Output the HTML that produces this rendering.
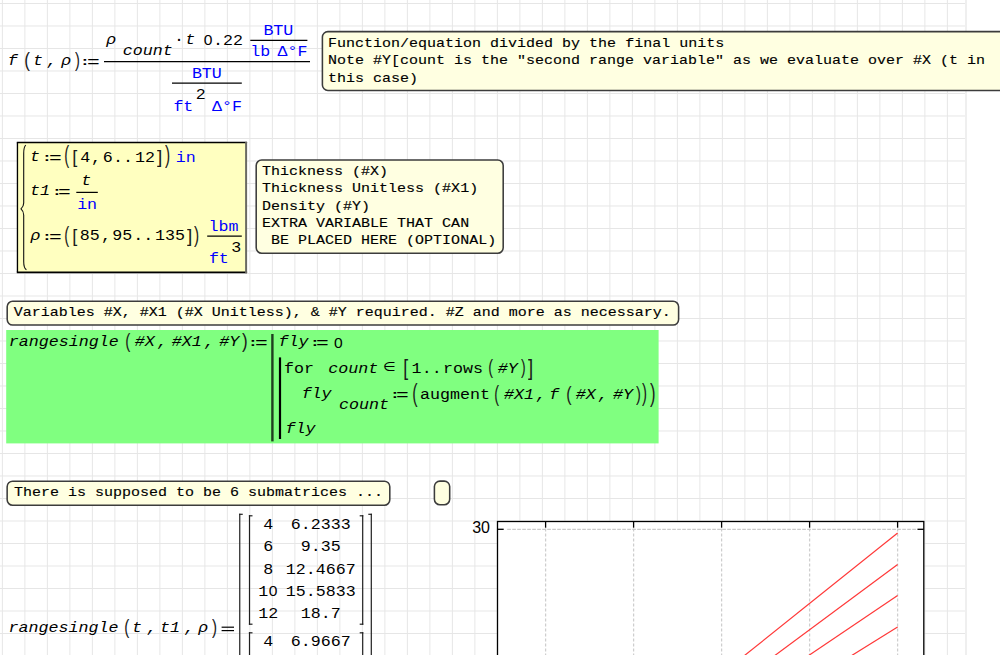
<!DOCTYPE html>
<html><head><meta charset="utf-8"><title>SMath worksheet</title>
<style>
html,body{margin:0;padding:0}
body{width:1000px;height:655px;overflow:hidden;position:relative;background:#fff;font-family:"Liberation Mono",monospace}
#grid{position:absolute;left:0;top:0;width:966.6px;height:655px;
 background-image:linear-gradient(to right,#e6e6e6 1.2px,transparent 1.2px),linear-gradient(to bottom,#e6e6e6 1.2px,transparent 1.2px);
 background-size:22.5px 22.5px;background-position:1.9px 3.0px}
#edge{position:absolute;left:965.4px;top:0;width:1.2px;height:655px;background:#efefef}
.t{position:absolute;white-space:pre;line-height:1;font-size:16.67px;color:#000;font-family:"Liberation Mono",monospace}
.mi,.mn,.mu{transform-origin:0 12px;transform:scaleY(0.88)}
.tx{transform-origin:0 11px;transform:scaleY(0.8);-webkit-text-stroke:0.15px #000}
.z{font:normal 15.6px "Liberation Sans",sans-serif;display:inline-block;width:10px;text-align:center;line-height:0}
.mi{font-style:italic}
.mu{color:#0000ff}
.ss{font-family:"Liberation Sans",sans-serif}
.c{text-align:center}
#shapes{position:absolute;left:0;top:0;overflow:hidden}
</style></head><body>
<div id="grid"></div><div id="edge"></div>
<svg id="shapes" width="1000" height="655" viewBox="0 0 1000 655">
<line x1="104.00" y1="61.60" x2="310.00" y2="61.60" stroke="#000" stroke-width="1.25"/>
<line x1="250.30" y1="40.30" x2="307.40" y2="40.30" stroke="#000" stroke-width="1.25"/>
<line x1="172.00" y1="83.00" x2="241.80" y2="83.00" stroke="#000" stroke-width="1.25"/>
<rect x="322.40" y="31.60" width="697.60" height="58.80" rx="5.5" fill="#ffffe1" stroke="#3c3c3c" stroke-width="1.55"/>
<rect x="17.45" y="142.5" width="228.9" height="129.85" fill="#ffffc0"/>
<line x1="16.80" y1="142.50" x2="247.10" y2="142.50" stroke="#000" stroke-width="1.35"/>
<line x1="17.45" y1="142.50" x2="17.45" y2="272.30" stroke="#000" stroke-width="1.35"/>
<line x1="16.80" y1="272.30" x2="247.10" y2="272.30" stroke="#000" stroke-width="1.80"/>
<line x1="246.10" y1="141.90" x2="246.10" y2="273.20" stroke="#6a6a62" stroke-width="2.00"/>
<path d="M25.8 145.2 C24.2 146.6 23.7 149 23.7 153.5 L23.7 203 Q23.7 206.5 21.0 208.9 Q23.7 211.3 23.7 215 L23.7 261.5 C23.7 266 24.2 268.4 26.4 269.8" fill="none" stroke="#111" stroke-width="1.1"/>
<line x1="76.30" y1="192.40" x2="97.80" y2="192.40" stroke="#000" stroke-width="1.25"/>
<line x1="207.20" y1="236.10" x2="241.80" y2="236.10" stroke="#000" stroke-width="1.25"/>
<rect x="256.20" y="160.00" width="247.00" height="93.20" rx="5.5" fill="#ffffe1" stroke="#3c3c3c" stroke-width="1.55"/>
<rect x="7.20" y="301.30" width="671.40" height="23.80" rx="5.5" fill="#ffffe1" stroke="#3c3c3c" stroke-width="1.55"/>
<rect x="6.2" y="330" width="652.4" height="113.4" fill="#80ff80"/>
<line x1="272.40" y1="334.00" x2="272.40" y2="441.40" stroke="#1f3f1f" stroke-width="2.40"/>
<line x1="280.00" y1="357.40" x2="280.00" y2="439.00" stroke="#000" stroke-width="2.20"/>
<rect x="7.15" y="481.20" width="382.65" height="24.00" rx="5.5" fill="#ffffe1" stroke="#3c3c3c" stroke-width="1.55"/>
<rect x="434.40" y="481.10" width="15.30" height="23.60" rx="5.5" fill="#ffffe1" stroke="#3c3c3c" stroke-width="1.55"/>
<line x1="221.60" y1="627.20" x2="234.00" y2="627.20" stroke="#000" stroke-width="1.20"/>
<line x1="221.60" y1="630.60" x2="234.00" y2="630.60" stroke="#000" stroke-width="1.20"/>
<line x1="239.75" y1="513.70" x2="239.75" y2="660.00" stroke="#202020" stroke-width="1.20"/>
<line x1="239.15" y1="514.30" x2="242.75" y2="514.30" stroke="#202020" stroke-width="1.20"/>
<line x1="371.30" y1="513.70" x2="371.30" y2="660.00" stroke="#202020" stroke-width="1.20"/>
<line x1="368.30" y1="514.30" x2="371.90" y2="514.30" stroke="#202020" stroke-width="1.20"/>
<line x1="249.50" y1="515.20" x2="249.50" y2="624.80" stroke="#202020" stroke-width="1.20"/>
<line x1="248.90" y1="515.80" x2="252.50" y2="515.80" stroke="#202020" stroke-width="1.20"/>
<line x1="248.90" y1="624.20" x2="252.50" y2="624.20" stroke="#202020" stroke-width="1.20"/>
<line x1="362.70" y1="515.20" x2="362.70" y2="624.80" stroke="#202020" stroke-width="1.20"/>
<line x1="359.70" y1="515.80" x2="363.30" y2="515.80" stroke="#202020" stroke-width="1.20"/>
<line x1="359.70" y1="624.20" x2="363.30" y2="624.20" stroke="#202020" stroke-width="1.20"/>
<line x1="249.50" y1="632.20" x2="249.50" y2="660.00" stroke="#202020" stroke-width="1.20"/>
<line x1="248.90" y1="632.80" x2="252.50" y2="632.80" stroke="#202020" stroke-width="1.20"/>
<line x1="362.70" y1="632.20" x2="362.70" y2="660.00" stroke="#202020" stroke-width="1.20"/>
<line x1="359.70" y1="632.80" x2="363.30" y2="632.80" stroke="#202020" stroke-width="1.20"/>
<rect x="497.5" y="521.5" width="426.3" height="200" fill="#fff" stroke="#000" stroke-width="1.3"/>
<line x1="545.6" y1="528.6" x2="545.6" y2="660" stroke="#cecece" stroke-width="1.25" stroke-dasharray="2.9 2.1"/>
<line x1="545.6" y1="521.5" x2="545.6" y2="527.7" stroke="#000" stroke-width="1.3"/>
<line x1="633.6" y1="528.6" x2="633.6" y2="660" stroke="#cecece" stroke-width="1.25" stroke-dasharray="2.9 2.1"/>
<line x1="633.6" y1="521.5" x2="633.6" y2="527.7" stroke="#000" stroke-width="1.3"/>
<line x1="721.6" y1="528.6" x2="721.6" y2="660" stroke="#cecece" stroke-width="1.25" stroke-dasharray="2.9 2.1"/>
<line x1="721.6" y1="521.5" x2="721.6" y2="527.7" stroke="#000" stroke-width="1.3"/>
<line x1="809.6" y1="528.6" x2="809.6" y2="660" stroke="#cecece" stroke-width="1.25" stroke-dasharray="2.9 2.1"/>
<line x1="809.6" y1="521.5" x2="809.6" y2="527.7" stroke="#000" stroke-width="1.3"/>
<line x1="897.6" y1="528.6" x2="897.6" y2="660" stroke="#cecece" stroke-width="1.25" stroke-dasharray="2.9 2.1"/>
<line x1="897.6" y1="521.5" x2="897.6" y2="527.7" stroke="#000" stroke-width="1.3"/>
<line x1="507.2" y1="529.4" x2="917.5" y2="529.4" stroke="#cacaca" stroke-width="1.25" stroke-dasharray="3.7 1.3"/>
<line x1="497.5" y1="529.3" x2="503.7" y2="529.3" stroke="#000" stroke-width="1.3"/>
<line x1="917.5" y1="529.3" x2="923.8" y2="529.3" stroke="#000" stroke-width="1.3"/>
<line x1="897.6" y1="533.0" x2="736.4" y2="662.0" stroke="#ff3838" stroke-width="1.2"/>
<line x1="897.6" y1="564.4" x2="766.1" y2="662.0" stroke="#ff3838" stroke-width="1.2"/>
<line x1="897.6" y1="595.4" x2="799.1" y2="662.0" stroke="#ff3838" stroke-width="1.2"/>
<line x1="897.6" y1="627.0" x2="841.3" y2="662.0" stroke="#ff3838" stroke-width="1.2"/>
</svg>
<span class="t mi" style="left:7.64px;top:53.00px;">f</span>
<span class="t" style="left:24.46px;top:49.46px;font-size:20.0px;font-family:'Liberation Sans',sans-serif;transform-origin:1.24px 2.44px;transform:scale(0.849,1.047);color:#1a1a1a;">(</span>
<span class="t mi" style="left:32.92px;top:53.00px;">t</span>
<span class="t mi" style="left:46.82px;top:53.00px;">,</span>
<span class="t mi" style="left:61.35px;top:53.00px;">ρ</span>
<span class="t" style="left:74.68px;top:49.46px;font-size:20.0px;font-family:'Liberation Sans',sans-serif;transform-origin:0.12px 2.44px;transform:scale(0.735,1.047);color:#1a1a1a;">)</span>
<span class="t" style="left:80.23px;top:55.22px;font-size:16.0px;font-family:'Liberation Mono',monospace;transform-origin:3.67px 3.78px;transform:scale(1.063,0.708);font-weight:bold;">:</span>
<span class="t" style="left:86.71px;top:54.11px;font-size:21.0px;font-family:'Liberation Mono',monospace;transform-origin:1.19px 5.79px;transform:scale(1.010,0.754);">=</span>
<span class="t mi" style="left:106.25px;top:32.00px;">ρ</span>
<span class="t mi" style="left:122.69px;top:43.00px;">count</span>
<span class="t mn" style="left:173.96px;top:32.00px;">·</span>
<span class="t mi" style="left:185.22px;top:32.00px;">t</span>
<span class="t mn" style="left:203.09px;top:33.00px;"><b class="z">0</b>.22</span>
<span class="t mu" style="left:263.38px;top:23.00px;">BTU</span>
<span class="t mu" style="left:250.23px;top:44.00px;">lb</span>
<span class="t mu" style="left:277.60px;top:44.00px;">Δ°F</span>
<span class="t mu" style="left:191.88px;top:66.00px;">BTU</span>
<span class="t mu" style="left:173.38px;top:99.00px;">ft</span>
<span class="t mn" style="left:195.63px;top:87.00px;">2</span>
<span class="t mu" style="left:212.10px;top:99.00px;">Δ°F</span>
<span class="t tx" style="left:328.08px;top:36.00px;font-size:15.00px;">Function/equation divided by the final units</span>
<span class="t tx" style="left:327.91px;top:53.00px;font-size:15.00px;">Note #Y[count is the "second range variable" as we evaluate over #X (t in</span>
<span class="t tx" style="left:328.11px;top:71.00px;font-size:15.00px;">this case)</span>
<span class="t mi" style="left:29.92px;top:149.00px;">t</span>
<span class="t" style="left:42.13px;top:151.32px;font-size:16.0px;font-family:'Liberation Mono',monospace;transform-origin:3.67px 3.78px;transform:scale(1.063,0.708);font-weight:bold;">:</span>
<span class="t" style="left:48.61px;top:150.21px;font-size:21.0px;font-family:'Liberation Mono',monospace;transform-origin:1.19px 5.79px;transform:scale(1.010,0.754);">=</span>
<span class="t" style="left:64.06px;top:143.36px;font-size:20.0px;font-family:'Liberation Sans',sans-serif;transform-origin:1.24px 2.44px;transform:scale(0.735,1.186);color:#1a1a1a;">(</span>
<span class="t" style="left:71.57px;top:146.56px;font-size:20.0px;font-family:'Liberation Sans',sans-serif;transform-origin:1.43px 2.44px;transform:scale(0.906,0.944);color:#1a1a1a;">[</span>
<span class="t mn" style="left:80.36px;top:150.00px;">4</span>
<span class="t mn" style="left:91.09px;top:150.00px;">,</span>
<span class="t mn" style="left:102.67px;top:150.00px;">6</span>
<span class="t mn" style="left:112.96px;top:150.00px;">..</span>
<span class="t mn" style="left:135.10px;top:150.00px;">12</span>
<span class="t" style="left:157.34px;top:146.56px;font-size:20.0px;font-family:'Liberation Sans',sans-serif;transform-origin:0.16px 2.44px;transform:scale(0.956,0.944);color:#1a1a1a;">]</span>
<span class="t" style="left:164.58px;top:143.36px;font-size:20.0px;font-family:'Liberation Sans',sans-serif;transform-origin:0.12px 2.44px;transform:scale(0.773,1.186);color:#1a1a1a;">)</span>
<span class="t mu" style="left:175.84px;top:150.00px;">in</span>
<span class="t mi" style="left:29.92px;top:183.00px;">t1</span>
<span class="t" style="left:51.83px;top:185.42px;font-size:16.0px;font-family:'Liberation Mono',monospace;transform-origin:3.67px 3.78px;transform:scale(1.063,0.708);font-weight:bold;">:</span>
<span class="t" style="left:58.31px;top:184.31px;font-size:21.0px;font-family:'Liberation Mono',monospace;transform-origin:1.19px 5.79px;transform:scale(1.010,0.754);">=</span>
<span class="t mi" style="left:81.22px;top:173.00px;">t</span>
<span class="t mu" style="left:77.14px;top:197.00px;">in</span>
<span class="t mi" style="left:30.45px;top:228.00px;">ρ</span>
<span class="t" style="left:42.13px;top:230.32px;font-size:16.0px;font-family:'Liberation Mono',monospace;transform-origin:3.67px 3.78px;transform:scale(1.063,0.708);font-weight:bold;">:</span>
<span class="t" style="left:48.61px;top:229.21px;font-size:21.0px;font-family:'Liberation Mono',monospace;transform-origin:1.19px 5.79px;transform:scale(1.010,0.754);">=</span>
<span class="t" style="left:64.06px;top:223.36px;font-size:20.0px;font-family:'Liberation Sans',sans-serif;transform-origin:1.24px 2.44px;transform:scale(0.735,1.116);color:#1a1a1a;">(</span>
<span class="t" style="left:71.57px;top:226.56px;font-size:20.0px;font-family:'Liberation Sans',sans-serif;transform-origin:1.43px 2.44px;transform:scale(0.906,0.890);color:#1a1a1a;">[</span>
<span class="t mn" style="left:79.82px;top:228.00px;">85</span>
<span class="t mn" style="left:100.89px;top:228.00px;">,</span>
<span class="t mn" style="left:112.25px;top:228.00px;">95</span>
<span class="t mn" style="left:133.26px;top:228.00px;">..</span>
<span class="t mn" style="left:155.00px;top:228.00px;">135</span>
<span class="t" style="left:187.04px;top:226.56px;font-size:20.0px;font-family:'Liberation Sans',sans-serif;transform-origin:0.16px 2.44px;transform:scale(0.956,0.890);color:#1a1a1a;">]</span>
<span class="t" style="left:194.38px;top:223.36px;font-size:20.0px;font-family:'Liberation Sans',sans-serif;transform-origin:0.12px 2.44px;transform:scale(0.773,1.116);color:#1a1a1a;">)</span>
<span class="t mu" style="left:208.43px;top:219.00px;">lbm</span>
<span class="t mu" style="left:208.88px;top:251.00px;">ft</span>
<span class="t mn" style="left:231.16px;top:240.00px;">3</span>
<span class="t tx" style="left:262.10px;top:164.00px;font-size:15.00px;white-space:pre;">Thickness (#X)</span>
<span class="t tx" style="left:262.10px;top:181.00px;font-size:15.00px;white-space:pre;">Thickness Unitless (#X1)</span>
<span class="t tx" style="left:262.10px;top:199.00px;font-size:15.00px;white-space:pre;">Density (#Y)</span>
<span class="t tx" style="left:262.10px;top:216.00px;font-size:15.00px;white-space:pre;">EXTRA VARIABLE THAT CAN</span>
<span class="t tx" style="left:262.10px;top:233.00px;font-size:15.00px;white-space:pre;"> BE PLACED HERE (OPTIONAL)</span>
<span class="t tx" style="left:13.73px;top:305.00px;font-size:15.00px;">Variables #X, #X1 (#X Unitless), &amp; #Y required. #Z and more as necessary.</span>
<span class="t mi" style="left:8.76px;top:334.00px;">rangesingle</span>
<span class="t" style="left:124.76px;top:330.56px;font-size:20.0px;font-family:'Liberation Sans',sans-serif;transform-origin:1.24px 2.44px;transform:scale(0.754,1.020);color:#1a1a1a;">(</span>
<span class="t mi" style="left:134.77px;top:334.00px;">#X</span>
<span class="t mi" style="left:157.32px;top:334.00px;">,</span>
<span class="t mi" style="left:171.77px;top:334.00px;">#X1</span>
<span class="t mi" style="left:204.32px;top:334.00px;">,</span>
<span class="t mi" style="left:219.37px;top:334.00px;">#Y</span>
<span class="t" style="left:241.88px;top:330.56px;font-size:20.0px;font-family:'Liberation Sans',sans-serif;transform-origin:0.12px 2.44px;transform:scale(0.849,1.020);color:#1a1a1a;">)</span>
<span class="t" style="left:248.33px;top:336.42px;font-size:16.0px;font-family:'Liberation Mono',monospace;transform-origin:3.67px 3.78px;transform:scale(1.063,0.708);font-weight:bold;">:</span>
<span class="t" style="left:254.81px;top:335.31px;font-size:21.0px;font-family:'Liberation Mono',monospace;transform-origin:1.19px 5.79px;transform:scale(1.010,0.754);">=</span>
<span class="t mi" style="left:278.44px;top:334.00px;">fly</span>
<span class="t" style="left:309.93px;top:335.92px;font-size:16.0px;font-family:'Liberation Mono',monospace;transform-origin:3.67px 3.78px;transform:scale(1.063,0.708);font-weight:bold;">:</span>
<span class="t" style="left:316.41px;top:334.81px;font-size:21.0px;font-family:'Liberation Mono',monospace;transform-origin:1.19px 5.79px;transform:scale(1.010,0.754);">=</span>
<span class="t mn" style="left:333.39px;top:336.00px;"><b class="z">0</b></span>
<span class="t mn" style="left:284.08px;top:361.00px;">for</span>
<span class="t mi" style="left:328.29px;top:361.00px;">count</span>
<span class="t" style="left:383.23px;top:360.22px;font-size:16.0px;font-family:'DejaVu Sans',sans-serif;transform-origin:1.37px 2.18px;transform:scale(0.910,0.782);">∈</span>
<span class="t" style="left:402.77px;top:356.26px;font-size:20.0px;font-family:'Liberation Sans',sans-serif;transform-origin:1.43px 2.44px;transform:scale(0.881,1.110);color:#1a1a1a;">[</span>
<span class="t mn" style="left:411.40px;top:361.00px;">1</span>
<span class="t mn" style="left:421.86px;top:361.00px;">..</span>
<span class="t mn" style="left:443.03px;top:361.00px;">rows</span>
<span class="t" style="left:488.06px;top:357.36px;font-size:20.0px;font-family:'Liberation Sans',sans-serif;transform-origin:1.24px 2.44px;transform:scale(0.717,1.014);color:#1a1a1a;">(</span>
<span class="t mi" style="left:497.77px;top:361.00px;">#Y</span>
<span class="t" style="left:521.08px;top:357.36px;font-size:20.0px;font-family:'Liberation Sans',sans-serif;transform-origin:0.12px 2.44px;transform:scale(0.698,1.014);color:#1a1a1a;">)</span>
<span class="t" style="left:528.44px;top:356.26px;font-size:20.0px;font-family:'Liberation Sans',sans-serif;transform-origin:0.16px 2.44px;transform:scale(0.931,1.110);color:#1a1a1a;">]</span>
<span class="t mi" style="left:301.64px;top:386.00px;">fly</span>
<span class="t mi" style="left:339.09px;top:397.00px;">count</span>
<span class="t" style="left:389.93px;top:388.22px;font-size:16.0px;font-family:'Liberation Mono',monospace;transform-origin:3.67px 3.78px;transform:scale(1.063,0.708);font-weight:bold;">:</span>
<span class="t" style="left:396.41px;top:387.11px;font-size:21.0px;font-family:'Liberation Mono',monospace;transform-origin:1.19px 5.79px;transform:scale(1.010,0.754);">=</span>
<span class="t" style="left:412.06px;top:381.16px;font-size:20.0px;font-family:'Liberation Sans',sans-serif;transform-origin:1.24px 2.44px;transform:scale(0.792,1.256);color:#1a1a1a;">(</span>
<span class="t mn" style="left:419.96px;top:387.00px;">augment</span>
<span class="t" style="left:494.36px;top:382.36px;font-size:20.0px;font-family:'Liberation Sans',sans-serif;transform-origin:1.24px 2.44px;transform:scale(0.717,1.111);color:#1a1a1a;">(</span>
<span class="t mi" style="left:504.07px;top:387.00px;">#X1</span>
<span class="t mi" style="left:535.92px;top:387.00px;">,</span>
<span class="t mi" style="left:549.24px;top:387.00px;">f</span>
<span class="t" style="left:565.56px;top:383.06px;font-size:20.0px;font-family:'Liberation Sans',sans-serif;transform-origin:1.24px 2.44px;transform:scale(0.792,1.052);color:#1a1a1a;">(</span>
<span class="t mi" style="left:575.77px;top:387.00px;">#X</span>
<span class="t mi" style="left:597.92px;top:387.00px;">,</span>
<span class="t mi" style="left:613.07px;top:387.00px;">#Y</span>
<span class="t" style="left:635.58px;top:383.06px;font-size:20.0px;font-family:'Liberation Sans',sans-serif;transform-origin:0.12px 2.44px;transform:scale(0.735,1.052);color:#1a1a1a;">)</span>
<span class="t" style="left:642.48px;top:382.06px;font-size:20.0px;font-family:'Liberation Sans',sans-serif;transform-origin:0.12px 2.44px;transform:scale(0.754,1.159);color:#1a1a1a;">)</span>
<span class="t" style="left:649.78px;top:381.16px;font-size:20.0px;font-family:'Liberation Sans',sans-serif;transform-origin:0.12px 2.44px;transform:scale(0.830,1.256);color:#1a1a1a;">)</span>
<span class="t mi" style="left:285.44px;top:421.00px;">fly</span>
<span class="t tx" style="left:13.94px;top:485.00px;font-size:15.00px;">There is supposed to be 6 submatrices ...</span>
<span class="t mi" style="left:8.46px;top:620.00px;">rangesingle</span>
<span class="t" style="left:124.36px;top:616.76px;font-size:20.0px;font-family:'Liberation Sans',sans-serif;transform-origin:1.24px 2.44px;transform:scale(0.754,1.030);color:#1a1a1a;">(</span>
<span class="t mi" style="left:132.02px;top:620.00px;">t</span>
<span class="t mi" style="left:146.72px;top:620.00px;">,</span>
<span class="t mi" style="left:160.02px;top:620.00px;">t1</span>
<span class="t mi" style="left:184.32px;top:620.00px;">,</span>
<span class="t mi" style="left:198.15px;top:620.00px;">ρ</span>
<span class="t" style="left:211.88px;top:616.76px;font-size:20.0px;font-family:'Liberation Sans',sans-serif;transform-origin:0.12px 2.44px;transform:scale(0.754,1.030);color:#1a1a1a;">)</span>
<span class="t mn c" style="left:248.20px;top:517.00px;width:40px">4</span>
<span class="t mn c" style="left:275.70px;top:517.00px;width:90px">6.2333</span>
<span class="t mn c" style="left:248.20px;top:539.00px;width:40px">6</span>
<span class="t mn c" style="left:275.70px;top:539.00px;width:90px">9.35</span>
<span class="t mn c" style="left:248.20px;top:562.00px;width:40px">8</span>
<span class="t mn c" style="left:275.70px;top:562.00px;width:90px">12.4667</span>
<span class="t mn c" style="left:248.20px;top:584.00px;width:40px">1<b class="z">0</b></span>
<span class="t mn c" style="left:275.70px;top:584.00px;width:90px">15.5833</span>
<span class="t mn c" style="left:248.20px;top:606.00px;width:40px">12</span>
<span class="t mn c" style="left:275.70px;top:606.00px;width:90px">18.7</span>
<span class="t mn c" style="left:248.20px;top:634.00px;width:40px">4</span>
<span class="t mn c" style="left:275.70px;top:634.00px;width:90px">6.9667</span>
<span class="t ss" style="left:472.19px;top:520.00px;font-size:16.00px;">30</span>
</body></html>
